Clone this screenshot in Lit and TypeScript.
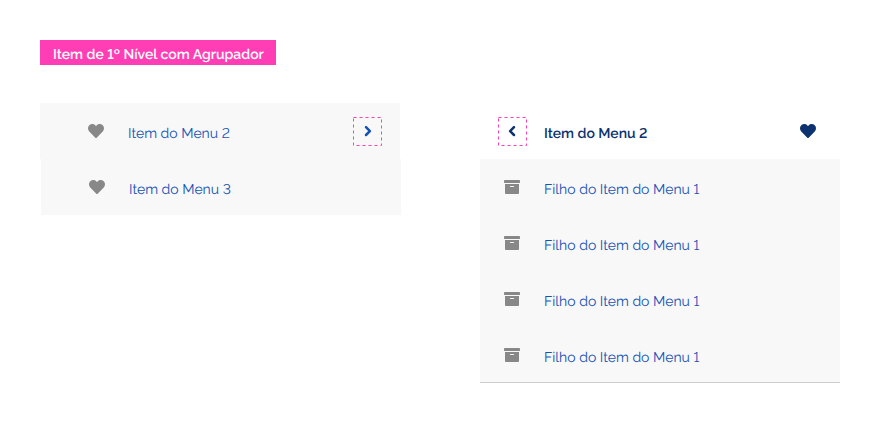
import { LitElement, html, css, svg } from "lit";
import { customElement, property } from "lit/decorators.js";

const heart = svg`<svg width="16" height="16" viewBox="0 0 512 512"><path fill="currentColor" d="M462.3 62.6C407.5 15.9 326 24.3 275.7 76.2L256 96.5l-19.7-20.3C186.1 24.3 104.5 15.9 49.7 62.6c-62.8 53.6-66.1 149.8-9.9 207.9l193.5 199.8c12.5 12.9 32.8 12.9 45.3 0l193.5-199.8c56.3-58.1 53-154.3-9.8-207.9z"/></svg>`;
const archive = svg`<svg width="16" height="16" viewBox="0 0 512 512"><path fill="currentColor" d="M32 448c0 17.700 14.300 32 32 32h384c17.700 0 32-14.300 32-32V160H32v288zm160-212c0-6.600 5.400-12 12-12h104c6.600 0 12 5.400 12 12v8c0 6.600-5.400 12-12 12H204c-6.600 0-12-5.400-12-12v-8zM480 32H32C14.300 32 0 46.300 0 64v48c0 8.800 7.200 16 16 16h480c8.800 0 16-7.200 16-16V64c0-17.700-14.300-32-32-32z"/></svg>`;

@customElement("toggle-box")
class ToggleBox extends LitElement {
  @property() direction = "right";
  static styles = css`
    :host { display: block; width: 29px; height: 29px; }
    svg { display: block; }
  `;
  render() {
    const points = this.direction === "right" ? "13,10.2 16.9,14.1 13,18" : "16,10.2 12.1,14.1 16,18";
    return html`<svg width="29" height="29" viewBox="0 0 29 29" fill="none">
      <rect x=".5" y=".5" width="28" height="28" stroke="#ff3eb5" stroke-dasharray="3 3"/>
      <polyline points=${points} stroke="currentColor" stroke-width="2.5" stroke-linejoin="round" stroke-linecap="round"/>
    </svg>`;
  }
}

@customElement("app-root")
class AppRoot extends LitElement {
  static styles = css`
    :host {
      display: block; box-sizing: border-box; width: 880px; height: 423px; padding: 40px;
      background: #fff; color: #1351b4; font: 14px/20px Raleway, Lato, sans-serif;
      font-variant-numeric: lining-nums; text-rendering: geometricPrecision;
    }
    svg { display: block; }
    .tag {
      box-sizing: border-box; width: 236px; height: 25px; padding: 5px 0 0 13px; margin-bottom: 38px;
      background: #ff3eb5; color: #fff; font-weight: 600; white-space: nowrap;
    }
    .columns { display: flex; justify-content: space-between; align-items: flex-start; }
    .list { width: 360px; }
    .row { box-sizing: border-box; display: flex; height: 56px; background: #f8f8f8; }
    .icon { color: #888; padding-top: 20px; width: 40px; flex: none; }
    .text { flex: 1; padding-top: 21px; white-space: nowrap; }
    .main { padding-left: 48px; padding-right: 18px; }
    .shifted { margin-left: 1px; margin-right: -1px; }
    .main toggle-box { margin-top: 14px; }
    .head { background: #fff; color: #0c326f; padding: 0 24px 0 18px; }
    .head toggle-box { margin: 14px 17px 0 0; }
    .head .text { font-weight: 600; }
    .head .icon { color: #0c326f; width: 16px; }
    .child { padding-left: 24px; }
    .child:last-child { border-bottom: 1px solid #ccc; }
  `;
  render() {
    return html`
      <div class="tag">Item de 1º Nível com Agrupador</div>
      <div class="columns">
        <div class="list">
          <div class="row main"><span class="icon">${heart}</span><span class="text">Item do Menu 2</span><toggle-box></toggle-box></div>
          <div class="row main shifted"><span class="icon">${heart}</span><span class="text">Item do Menu 3</span></div>
        </div>
        <div class="list">
          <div class="row head"><toggle-box direction="left"></toggle-box><span class="text">Item do Menu 2</span><span class="icon">${heart}</span></div>
          ${[0, 1, 2, 3].map(() => html`<div class="row child"><span class="icon">${archive}</span><span class="text">Filho do Item do Menu 1</span></div>`)}
        </div>
      </div>`;
  }
}
